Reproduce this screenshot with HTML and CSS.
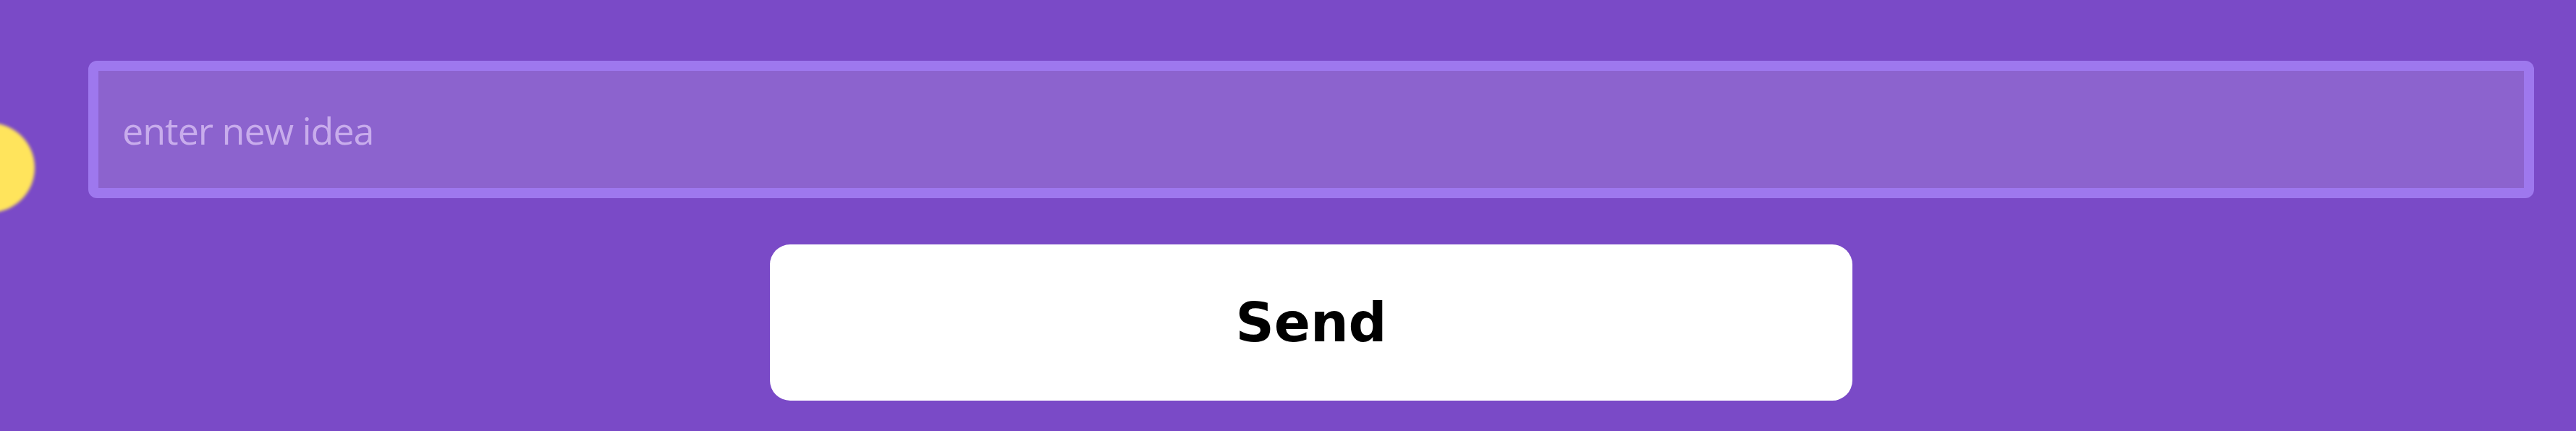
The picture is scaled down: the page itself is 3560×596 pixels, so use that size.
FILE: index.html
```html
<!DOCTYPE html>
<html lang="en">
<head>
<meta charset="utf-8">
<title>New idea</title>
<link rel="stylesheet" href="styles.css">
</head>
<body>
<div class="blob"></div>
<form class="idea-form">
  <input class="idea-input" type="text" placeholder="enter new idea">
  <button class="send-btn" type="button">Send</button>
</form>
</body>
</html>
```
FILE: styles.css
```css
html, body {
  margin: 0;
  padding: 0;
}
body {
  background: #7a4ac7;
  width: 3560px;
  height: 596px;
  overflow: hidden;
  position: relative;
  font-family: "Open Sans", "Noto Sans", sans-serif;
}
.blob {
  position: absolute;
  left: -76px;
  top: 170px;
  width: 124px;
  height: 124px;
  border-radius: 50%;
  background: #ffe45c;
  filter: blur(2px);
}
.idea-form {
  display: flex;
  flex-direction: column;
  align-items: center;
  gap: 64px;
  padding: 84px 0 0 122px;
  width: 3380px;
}
.idea-input {
  box-sizing: border-box;
  width: 3380px;
  height: 190px;
  border: 14px solid #9e78ee;
  border-radius: 12px;
  background: #8c63ce;
  padding: 0 33px;
  font-family: "Open Sans", "Noto Sans", sans-serif;
  font-size: 52px;
  color: #fff;
  outline: none;
}
.idea-input::placeholder {
  color: #c8acec;
  letter-spacing: -1px;
}
.send-btn {
  box-sizing: border-box;
  width: 1496px;
  height: 216px;
  border: none;
  border-radius: 28px;
  background: #ffffff;
  color: #000;
  font-family: "DejaVu Sans", sans-serif;
  font-weight: bold;
  font-size: 74px;
  cursor: pointer;
}
```
